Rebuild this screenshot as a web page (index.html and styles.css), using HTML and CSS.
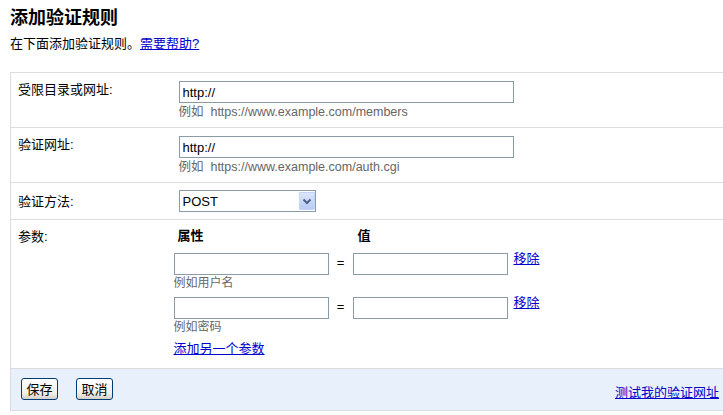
FILE: index.html
```html
<!DOCTYPE html>
<html>
<head>
  <meta charset="UTF-8">
  <title>添加验证规则</title>
  <link rel="stylesheet" href="styles.css">
</head>
<body>
  <h1>添加验证规则</h1>
  <p class="intro">在下面添加验证规则。<a href="#">需要帮助?</a></p>

  <table class="ruleTable">
    <colgroup>
      <col class="labelCol">
      <col>
    </colgroup>
    <tr>
      <td class="label">受限目录或网址:</td>
      <td class="field">
        <input type="text" class="urlInput" value="http://">
        <div class="hint urlHint">例如&nbsp; https://www.example.com/members</div>
      </td>
    </tr>
    <tr>
      <td class="label">验证网址:</td>
      <td class="field">
        <input type="text" class="urlInput" value="http://">
        <div class="hint urlHint">例如&nbsp; https://www.example.com/auth.cgi</div>
      </td>
    </tr>
    <tr>
      <td class="label label-select">验证方法:</td>
      <td class="field field-select">
        <span class="selectBox">
          <select id="methodSelect">
            <option value="post">POST</option>
            <option value="get">GET</option>
          </select>
          <span class="selectArrow">
            <svg width="16" height="18" viewBox="0 0 16 18">
              <path d="M4.5 7.5 L8 11 L11.5 7.5" fill="none" stroke="#4d6185" stroke-width="2"/>
            </svg>
          </span>
        </span>
      </td>
    </tr>
    <tr>
      <td class="label">参数:</td>
      <td class="field field-params">
        <div class="paramHead">
          <span class="headName">属性</span>
          <span class="headValue">值</span>
        </div>
        <div class="paramRow">
          <input type="text" class="paramInput">
          <span class="equals">=</span>
          <input type="text" class="paramInput">
          <a href="#" class="removeLink">移除</a>
        </div>
        <div class="hint paramHint">例如用户名</div>
        <div class="paramRow">
          <input type="text" class="paramInput">
          <span class="equals">=</span>
          <input type="text" class="paramInput">
          <a href="#" class="removeLink">移除</a>
        </div>
        <div class="hint paramHint">例如密码</div>
        <a href="#" class="addLink">添加另一个参数</a>
      </td>
    </tr>
    <tr class="footerRow">
      <td colspan="2">
        <div class="footerBar">
          <button type="button" class="btn">保存</button>
          <button type="button" class="btn">取消</button>
          <a href="#" class="testLink">测试我的验证网址</a>
        </div>
      </td>
    </tr>
  </table>
</body>
</html>
```

FILE: styles.css
```css
body {
  margin: 0;
  font-family: "Liberation Sans", "Noto Sans CJK SC", sans-serif;
  font-size: 13px;
  color: #000;
  overflow: hidden;
}

a {
  color: #0000cc;
  text-decoration: underline;
}

h1 {
  font-size: 18px;
  line-height: 20px;
  font-weight: bold;
  margin: 8px 0 8px 10px;
}

.intro {
  font-size: 13px;
  line-height: 16px;
  margin: 0 0 20px 10px;
}

/* main form table */
.ruleTable {
  width: 740px;
  margin-left: 10px;
  border-collapse: collapse;
  table-layout: fixed;
  border: 1px solid #dcdcdc;
}

.labelCol {
  width: 160px;
}

.ruleTable td {
  border-top: 1px solid #dcdcdc;
  border-bottom: 1px solid #dcdcdc;
  vertical-align: top;
  padding: 8px 0 8px 0;
}

.label {
  padding-left: 7px !important;
  line-height: 16px;
  padding-top: 9px !important;
}

.label-select {
  padding-top: 11px !important;
}

.field {
  padding-left: 3px !important;
}

.urlInput {
  display: block;
  width: 335px;
  height: 22px;
  margin-left: 5px;
}

input[type="text"] {
  box-sizing: border-box;
  border: 1px solid #8a9da6;
  padding: 0 3px;
  font-family: "Liberation Sans", sans-serif;
  font-size: 13px;
  color: #000;
  background: #fff;
}

.hint {
  color: #666;
  font-size: 12px;
}

.urlHint {
  margin: 2px 0 0 5px;
  line-height: 14px;
  font-size: 12.5px;
}

/* select */
.field-select {
  padding-top: 7px !important;
  padding-bottom: 7px !important;
}

.selectBox {
  position: relative;
  display: inline-block;
  margin-left: 5px;
  vertical-align: top;
}

.selectBox select {
  display: block;
  box-sizing: border-box;
  width: 137px;
  height: 22px;
  border: 1px solid #8a9da6;
  background: #fff;
  font-family: "Liberation Sans", sans-serif;
  font-size: 13px;
  padding: 0 0 0 3px;
  -webkit-appearance: none;
  appearance: none;
  border-radius: 0;
  color: #000;
}

.selectArrow {
  position: absolute;
  right: 1px;
  top: 1px;
  width: 16px;
  height: 18px;
  margin-top: 1px;
  box-sizing: border-box;
  border: 1px solid #c3d3fd;
  background: linear-gradient(#dbe6fe, #b7cbf7);
  border-radius: 1px;
}

.selectArrow svg {
  display: block;
  margin: -1px 0 0 -1px;
}

/* parameters */
.field-params {
  padding-bottom: 11px !important;
}

.paramHead {
  display: flex;
  font-weight: bold;
  line-height: 16px;
  margin-bottom: 9px;
}

.headName {
  width: 176px;
  padding-left: 4px;
}

.headValue {
  padding-left: 4px;
}

.paramRow {
  display: flex;
  align-items: flex-start;
}

.paramInput {
  width: 155px;
  height: 22px;
}

.equals {
  width: 24px;
  text-align: center;
  line-height: 20px;
  font-size: 13px;
}

.removeLink {
  margin-left: 6px;
  line-height: 14px;
  margin-top: -1px;
}

.paramHint {
  line-height: 16px;
  margin-bottom: 6px;
}

.addLink {
  display: inline-block;
  line-height: 16px;
  margin-top: 0;
}

/* footer */
.footerRow td {
  background: #e8f1fb;
  padding: 9px 0 10px 0 !important;
}

.footerBar {
  display: flex;
  align-items: flex-end;
  width: 708px;
  padding-left: 10px;
  box-sizing: border-box;
}

.btn {
  box-sizing: border-box;
  width: 37px;
  height: 22px;
  padding: 0;
  margin-right: 18px;
  border: 1px solid #003c74;
  border-radius: 3px;
  background: linear-gradient(#ffffff, #f0f0ea 70%, #d6d0c5);
  font-family: "Noto Sans CJK SC", sans-serif;
  font-size: 13px;
  line-height: 18px;
  color: #000;
}

.testLink {
  margin-left: auto;
  line-height: 16px;
  margin-bottom: -1px;
}
```
